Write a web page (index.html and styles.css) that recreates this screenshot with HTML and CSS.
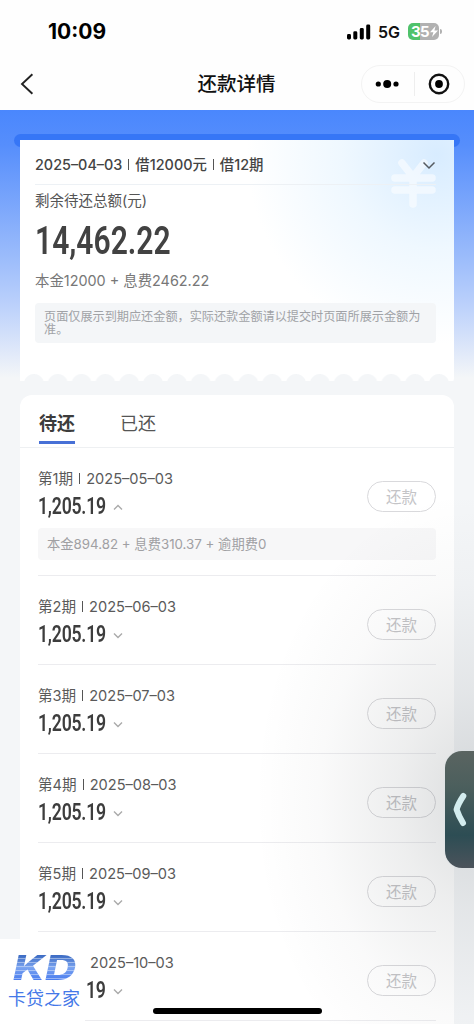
FILE: index.html
```html
<!DOCTYPE html>
<html lang="zh-CN">
<head>
<meta charset="utf-8">
<title>还款详情</title>
<link rel="stylesheet" href="styles.css">
</head>
<body>
<div class="phone">
  <header class="top">
    <div class="status">
      <span class="time">10:09</span>
      <span class="status-right">
        <svg class="signal" width="25" height="16" viewBox="0 0 25 16"><rect x="1" y="10" width="4" height="5.5" rx="1.4"/><rect x="7.3" y="7.3" width="4" height="8.2" rx="1.4"/><rect x="13.8" y="4" width="4" height="11.5" rx="1.4"/><rect x="20.2" y="0.6" width="4" height="14.9" rx="1.4"/></svg>
        <span class="net">5G</span>
        <span class="battery"><span class="level">35</span><svg width="8" height="11" viewBox="0 0 8 11"><path d="M5.6 0 0 6.2h3.4L2 11l6-6.6H4.4z" fill="#fff"/></svg></span><i class="cap"></i>
      </span>
    </div>
    <nav class="nav">
      <svg class="back" width="14" height="22" viewBox="0 0 14 22"><path d="M12.4 1.2 2 11l10.400 9.800" fill="none" stroke="#222" stroke-width="1.9"/></svg>
      <h1>还款详情</h1>
      <div class="capsule">
        <svg width="26" height="12" viewBox="0 0 26 12"><circle cx="4.300" cy="6" r="2.600"/><circle cx="13.200" cy="6" r="4"/><circle cx="22" cy="6" r="2.600"/></svg>
        <i></i>
        <svg width="22" height="22" viewBox="0 0 22 22"><circle cx="11" cy="11" r="9.200" fill="none" stroke="#111" stroke-width="2.400"/><circle cx="11" cy="11" r="3.900"/></svg>
      </div>
    </nav>
  </header>
  <main class="content">
    <div class="slot"></div>
    <section class="summary">
      <svg class="yen" width="46" height="54" viewBox="0 0 46 54"><path d="M12 7 23 21 34 7M5 22h37M5 34h37M23 21v27" fill="none" stroke="#fff" stroke-width="7.500" stroke-linecap="round" stroke-linejoin="round"/></svg>
      <div class="loan"><span class="loan-text">2025–04–03<b class="sep"></b>借12000元<b class="sep"></b>借12期</span>
        <svg width="14" height="9" viewBox="0 0 14 9"><path d="m1.500 1.500 5.500 5.500 5.500-5.500" fill="none" stroke="#555a60" stroke-width="1.500"/></svg>
      </div>
      <p class="label">剩余待还总额(元)</p>
      <p class="total"><span>14,462.22</span></p>
      <p class="parts">本金12000 + 息费2462.22</p>
      <p class="notice">页面仅展示到期应还金额，实际还款金额请以提交时页面所展示金额为准。</p>
      <div class="scallop"></div>
    </section>
    <section class="list">
      <div class="tabs"><span class="tab active">待还</span><span class="tab">已还</span></div>
      <article class="term">
        <div class="row"><div><p class="date">第1期<b class="sep"></b>2025–05–03</p><p class="amount"><span>1,205.19</span><svg width="10" height="7" viewBox="0 0 10 7"><path d="m1 5.500 4-4 4 4"/></svg></p></div><button>还款</button></div>
        <p class="detail">本金894.82 + 息费310.37 + 逾期费0</p>
      </article>
      <article class="term"><div class="row"><div><p class="date">第2期<b class="sep"></b>2025–06–03</p><p class="amount"><span>1,205.19</span><svg width="10" height="7" viewBox="0 0 10 7"><path d="m1 1.500 4 4 4-4"/></svg></p></div><button>还款</button></div></article>
      <article class="term"><div class="row"><div><p class="date">第3期<b class="sep"></b>2025–07–03</p><p class="amount"><span>1,205.19</span><svg width="10" height="7" viewBox="0 0 10 7"><path d="m1 1.500 4 4 4-4"/></svg></p></div><button>还款</button></div></article>
      <article class="term"><div class="row"><div><p class="date">第4期<b class="sep"></b>2025–08–03</p><p class="amount"><span>1,205.19</span><svg width="10" height="7" viewBox="0 0 10 7"><path d="m1 1.500 4 4 4-4"/></svg></p></div><button>还款</button></div></article>
      <article class="term"><div class="row"><div><p class="date">第5期<b class="sep"></b>2025–09–03</p><p class="amount"><span>1,205.19</span><svg width="10" height="7" viewBox="0 0 10 7"><path d="m1 1.500 4 4 4-4"/></svg></p></div><button>还款</button></div></article>
      <article class="term last"><div class="row"><div><p class="date">2025–10–03</p><p class="amount"><span>19</span><svg width="10" height="7" viewBox="0 0 10 7"><path d="m1 1.500 4 4 4-4"/></svg></p></div><button>还款</button></div></article>
    </section>
  </main>
  <div class="haze"></div>
  <div class="drawer"><svg width="15" height="36" viewBox="0 0 15 36"><path d="M10.300 4Q5 12 3.600 17.500 5.500 23.500 10 31" fill="none" stroke="#d3ecee" stroke-width="6" stroke-linecap="round" stroke-linejoin="round"/></svg></div>
  <div class="brand"><span class="mark">KD</span><span class="brand-name">卡贷之家</span></div>
  <div class="home"></div>
</div>
</body>
</html>
```
FILE: styles.css
```css
* { box-sizing: border-box; margin: 0; padding: 0; }
body { background: #f4f6f8; font-family: Inter, "Noto Sans CJK SC", sans-serif; color: #444; }
.phone { position: relative; width: 474px; height: 1024px; overflow: hidden; background: #f4f6f8; }
.top { height: 110px; background: #fefefe; }
.status { height: 57px; padding: 6px 32px 0 48px; display: flex; align-items: center; justify-content: space-between; }
.time { font-size: 21px; font-weight: 700; color: #000; letter-spacing: 0; }
.status-right { display: flex; align-items: center; }
.net { font-size: 16px; font-weight: 600; color: #111; margin: 0 7px 0 7px; width: 23px; letter-spacing: -0.1px; }
.battery { width: 31px; height: 17px; border-radius: 5px; background: linear-gradient(90deg, #4fc26b 12px, #b1b1b1 12px); display: flex; align-items: center; padding-left: 3px; }
.level { color: #fff; font-size: 15px; line-height: 17px; font-weight: 700; letter-spacing: -0.6px; width: 19px; }
.cap { width: 2px; height: 5px; border-radius: 0 2px 2px 0; background: #b1b1b1; margin-left: 1px; }
.nav { height: 53px; padding: 0 9px 0 20px; display: grid; grid-template-columns: 104px 1fr 104px; align-items: center; }
h1 { font-size: 19.5px; font-weight: 500; line-height: 30px; color: #111; text-align: center; padding: 1px 12px 0 0; }
.capsule { height: 38px; border: 1px solid #f3f3f3; border-radius: 19px; display: flex; align-items: center; justify-content: space-between; padding: 0 14px 0 12px; }
.capsule i { width: 1px; height: 24px; background: #eee; }
.content { height: 914px; padding: 24px 20px 0; background: linear-gradient(180deg, #4a87fd 0, #568efc 35px, #9dbdfb 150px, #bfd3fb 200px, #f4f6f8 268px); }
.slot { height: 13px; margin: 0 -6px -7px; border-radius: 7px; background: #3676f6; }
.summary { position: relative; height: 241px; padding: 0 18px 0 15px; background: radial-gradient(ellipse 190px 190px at 96% 6%, #d8ecff 0, #eff8ff 50%, #fff 100%); }
.yen { position: absolute; right: 18px; top: 16px; opacity: .55; }
.loan { position: relative; height: 45px; padding: 3px 0 0 0; display: flex; align-items: center; justify-content: space-between; border-bottom: 1px solid #edf1f5; font-size: 14.400px; font-weight: 500; color: #444; }
.loan svg { margin-top: 3px; }
.sep { display: inline-block; width: 1px; height: 11px; background: #555; margin: 0 6px 0 6px; }
.label { font-size: 14.500px; line-height: 22px; padding-top: 5px; color: #555; }
.total { height: 55px; padding-top: 2px; display: flex; align-items: center; font-family: Roboto, sans-serif; font-weight: 600; font-size: 38px; color: #424242; }
.total span { transform: scaleX(.79); transform-origin: left; }
.parts { font-size: 14.400px; line-height: 28px; color: #777; }
.notice { height: 40px; margin-top: 8px; padding: 7px 9px; border-radius: 4px; background: #f4f6f8; color: #a0a2a6; font-size: 12.150px; line-height: 13px; }
.scallop { position: absolute; left: 0; right: 0; bottom: 0; height: 7px; background: radial-gradient(circle at 50% 10px, #f4f6f8 9.500px, transparent 10.500px) 2px 0 / 23.830px 7px repeat-x; }
.list { margin-top: 14px; height: 660px; border-radius: 12px; background: #fff; }
.tabs { height: 53px; padding: 6px 19px 0; display: flex; gap: 45px; border-bottom: 1px solid #eef0f2; font-size: 18px; color: #555; }
.tab { height: 43px; line-height: 45px; }
.active { font-weight: 600; color: #3c3c3c; border-bottom: 3px solid #4770d6; }
.term { margin: 0 18px; height: 89px; padding-top: 18px; border-bottom: 1px solid #ececef; }
.term:nth-child(2) { height: 128px; }
.row { display: flex; align-items: center; justify-content: space-between; height: 60px; }
.date { font-size: 14.600px; line-height: 24px; color: #5a5a5a; padding-top: 1px; }
.amount { display: flex; align-items: center; height: 30px; font-family: Roboto, sans-serif; font-weight: 600; font-size: 24px; color: #3d3d3d; margin-bottom: 5px; }
.amount span { width: 75px; transform: scaleX(.735); transform-origin: left; letter-spacing: -0.3px; }
.amount svg { margin-top: 2px; }
.amount svg path { fill: none; stroke: #aaa; stroke-width: 1.400; }
button { width: 69px; height: 31px; border: 1px solid #d9d9dc; border-radius: 16px; background: rgba(255,255,255,.3); font: 15.500px/29px Inter, "Noto Sans CJK SC", sans-serif; color: #c4c4c7; padding-top: 1px; }
.detail { height: 32px; margin-top: 2px; padding-left: 9px; border-radius: 4px; background: #f7f7f8; font-size: 13.300px; line-height: 32px; color: #a0a0a3; }
.last .date { padding-left: 52px; }
.last .amount span { width: 27px; margin-left: 48px; }
.haze { position: absolute; right: 0; top: 500px; width: 240px; height: 524px; background: radial-gradient(ellipse 220px 310px at 100% 300px, rgba(35,45,52,.16) 0, rgba(30,38,42,.08) 35%, rgba(30,35,40,.022) 70%, transparent 100%); }
.drawer { position: absolute; right: 0; top: 751px; width: 29px; height: 117px; border-radius: 17px 0 0 17px; background: linear-gradient(180deg, #5a6461 0, #4c5f5d 30%, #2d4d54 72%, #4b535b 100%); display: flex; align-items: center; padding-left: 8px; box-shadow: 0 0 2px #d8e0e4; }
.brand { position: absolute; left: 0; bottom: 0; width: 85px; height: 85px; background: #fff; padding: 12px 0 0 8px; display: flex; flex-direction: column; }
.mark { width: 60px; height: 33px; padding-left: 4px; font: italic 800 34px/33px Inter, sans-serif; color: transparent; background: repeating-linear-gradient(180deg, transparent 0 3px, rgba(255,255,255,.4) 3px 4px), linear-gradient(180deg, #3f6ec5 5px, #7ba4f0 50%, #3a70ee); -webkit-background-clip: text; background-clip: text; transform: scaleX(1.270); transform-origin: left; }
.brand-name { font-size: 18px; line-height: 30px; color: #4478e8; white-space: nowrap; }
.home { position: absolute; left: 153px; top: 1008px; width: 169px; height: 6px; border-radius: 3px; background: #000; }
```
